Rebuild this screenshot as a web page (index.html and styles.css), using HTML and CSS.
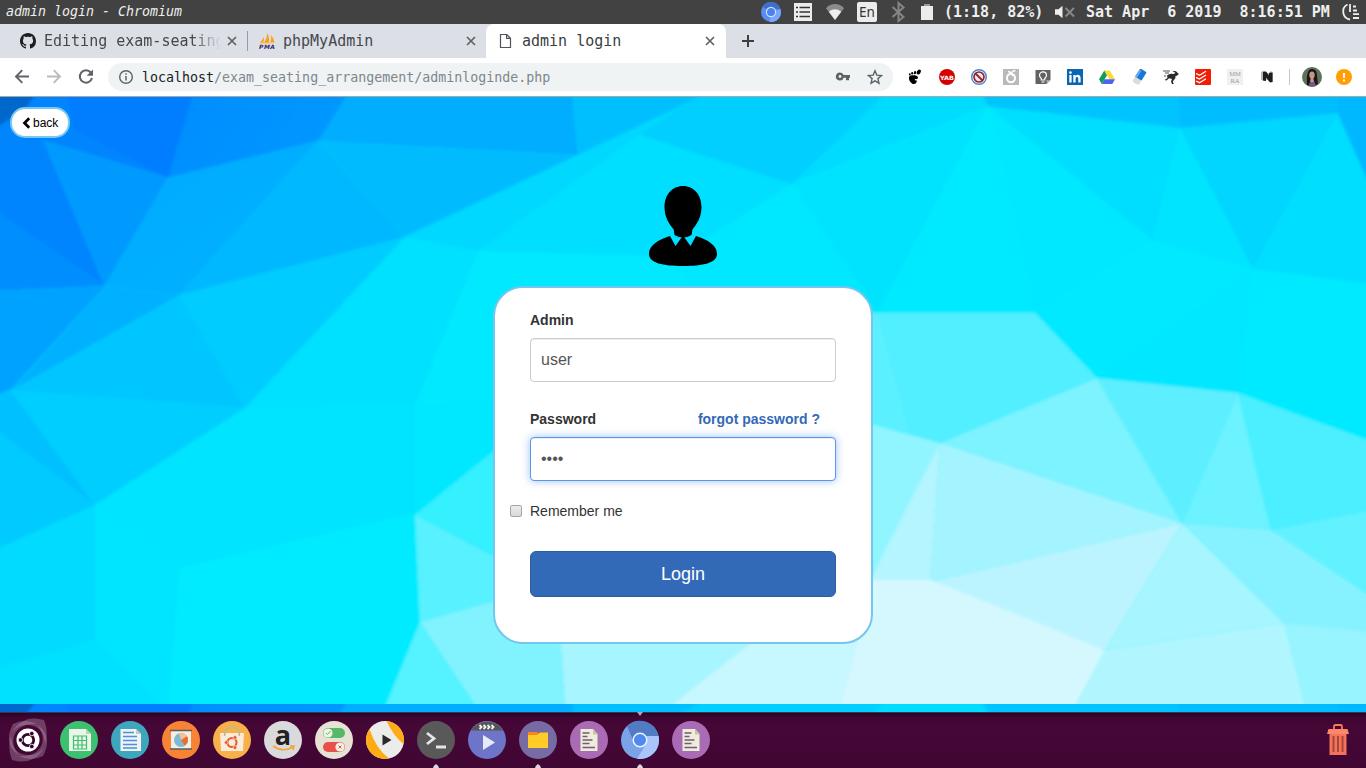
FILE: index.html
```html
<!DOCTYPE html>
<html lang="en">
<head>
<meta charset="utf-8">
<title>admin login</title>
<link rel="stylesheet" href="styles.css">
</head>
<body>
<div class="desktop">
  <header class="panel">
    <span class="panel-title">admin login - Chromium</span>
    <div class="indicators">
      <svg class="ind" viewBox="0 0 32 24"><circle cx="16" cy="12" r="10" fill="#5b8df0"/><path d="M16 12L7.500 6.500A10 10 0 0 1 25.500 9H16z" fill="#3f6fc9"/><path d="M16 12L25.600 9.300A10 10 0 0 1 14.500 22z" fill="#78a7fb"/><circle cx="16" cy="12" r="4.600" fill="#4b82ee" stroke="#cfe0ff" stroke-width="1.200"/></svg>
      <svg class="ind" viewBox="0 0 32 24"><path fill="#ececec" d="M7 3h18v18H7z"/><path d="M9 7.500h2m1.500 0H23M9 12h2m1.500 0H23M9 16.500h2m1.500 0H23" stroke="#333" stroke-width="1.700"/></svg>
      <svg class="ind" viewBox="0 0 32 24"><path fill="#8b8b8b" d="M7 8.200C12 2.700 20 2.700 25 8.200L16 20z"/><path fill="#eee" d="M9.800 11.700Q16 7 22.200 11.700L16 20z"/></svg>
      <svg class="ind" viewBox="0 0 32 24"><rect x="6" y="2" width="20" height="20" rx="2" fill="#ececec"/><text x="16" y="16.500" text-anchor="middle" class="en">En</text></svg>
      <svg class="ind" viewBox="0 0 32 24"><path d="M9.500 7l11 10L15.500 21V3l5 4.500-11 9.500" fill="none" stroke="#858585" stroke-width="2"/></svg>
      <svg class="ind battery" viewBox="0 0 26 24"><path fill="#999" d="M7 4h6v3H7z"/><path fill="#ececec" d="M4 6h12v14H4z"/></svg>
      <span class="charge">(1:18, 82%)</span>
      <svg class="volume" viewBox="0 0 22 24"><path fill="#eee" d="M1 9.300h3.500l4-3.600v12.600l-4-3.600H1z"/><path d="M11.500 8l8.500 8.500m0-8.500l-8.500 8.500" stroke="#888" stroke-width="2"/></svg>
      <span class="clock">Sat Apr&nbsp; 6 2019&nbsp; 8:16:51 PM</span>
      <svg class="session" viewBox="0 0 20 24"><path d="M7.500 4.500A8 8 0 0 0 10 19.500" fill="none" stroke="#eee" stroke-width="1.800"/><path d="M10 4v8" stroke="#eee" stroke-width="1.800"/><path d="M13 6.500h3M13 10.500h4M13 14.200h6M13 18h6" stroke="#eee" stroke-width="1.800"/></svg>
    </div>
  </header>

  <nav class="tabs">
    <div class="tab tab-github">
      <svg class="favicon" viewBox="0 0 16 16"><path fill="#1b1f23" d="M8 0C3.580 0 0 3.580 0 8c0 3.540 2.290 6.530 5.470 7.590.4.070.55-.17.55-.38 0-.19-.01-.82-.01-1.490-2.010.37-2.530-.49-2.690-.94-.09-.23-.48-.94-.82-1.130-.28-.15-.68-.52-.01-.53.63-.01 1.080.58 1.230.82.72 1.210 1.870.87 2.330.66.070-.52.28-.87.51-1.070-1.780-.2-3.640-.89-3.640-3.950 0-.87.31-1.590.82-2.150-.08-.2-.36-1.020.08-2.120 0 0 .67-.21 2.200.82.64-.18 1.320-.27 2-.27s1.360.09 2 .27c1.530-1.040 2.200-.82 2.200-.82.44 1.100.16 1.920.08 2.120.51.56.82 1.270.82 2.150 0 3.070-1.870 3.750-3.650 3.950.29.25.54.73.54 1.480 0 1.070-.01 1.930-.01 2.200 0 .21.15.46.55.38A8.010 8.010 0 0 0 16 8c0-4.420-3.580-8-8-8z"/></svg>
      <span class="tab-name fade">Editing exam-seating</span>
      <svg class="close" viewBox="0 0 10 10"><path d="M1 1l8 8m0-8L1 9"/></svg>
    </div>
    <div class="tab tab-pma">
      <svg class="favicon" viewBox="0 0 16 16"><path fill="#f8a11a" d="M1 10L5 4 4.500 10zM5 10Q8 5 8.500 0 11 5 10 10zM11 9.500Q13 6 11.500 1.500 15 5 15.500 9.500z"/><path d="M1 10h14" stroke="#f9c26b"/><text x="0" y="15.500" class="pma" textLength="16">PMA</text></svg>
      <span class="tab-name">phpMyAdmin</span>
      <svg class="close" viewBox="0 0 10 10"><path d="M1 1l8 8m0-8L1 9"/></svg>
    </div>
    <div class="tab tab-active">
      <svg class="favicon" viewBox="0 0 16 16"><path d="M2.500 1.500h6.300l3.700 3.700v9.300h-10zM8.600 1.500V5.400h3.900" fill="none" stroke="#505357" stroke-width="1.200"/></svg>
      <span class="tab-name">admin login</span>
      <svg class="close" viewBox="0 0 10 10"><path d="M1 1l8 8m0-8L1 9"/></svg>
    </div>
    <svg class="new-tab" viewBox="0 0 14 14"><path d="M7 1v12M1 7h12" stroke="#3c4043" stroke-width="2"/></svg>
  </nav>

  <div class="toolbar">
    <svg class="nav-btn" viewBox="0 0 32 32"><path d="M23 15.500H10m6.300-6.300L10 15.500l6.300 6.300" fill="none" stroke="#5f6368" stroke-width="1.900"/></svg>
    <svg class="nav-btn" viewBox="0 0 32 32"><path d="M9 15.500h13m-6.300-6.300l6.300 6.300-6.300 6.300" fill="none" stroke="#b9bbbe" stroke-width="1.900"/></svg>
    <svg class="nav-btn" viewBox="0 0 32 32"><path d="M20.800 11.500A6.200 6.200 0 1 0 22 17" fill="none" stroke="#5f6368" stroke-width="2"/><path d="M23 8.500v6.300h-6.300z" fill="#5f6368"/></svg>
    <div class="omnibox">
      <svg class="info" viewBox="0 0 16 16"><circle cx="8" cy="8" r="6.300" fill="none" stroke="#5f6368" stroke-width="1.400"/><path d="M8 7v4.500M8 4.300v1.500" stroke="#5f6368" stroke-width="1.500"/></svg>
      <span class="url"><b>localhost</b>/exam_seating_arrangement/adminloginde.php</span>
      <svg class="key" viewBox="0 0 16 16"><path fill="#5f6368" fill-rule="evenodd" d="M5 3.500a4 4 0 1 0 3.700 5.200H11v2.600h3V8.700h1V6.100H8.700A4 4 0 0 0 5 3.500zm0 2.600a1.400 1.400 0 1 1 0 2.800 1.400 1.400 0 0 1 0-2.800z"/></svg>
      <svg class="star" viewBox="0 0 16 16"><path d="M8 1.800l1.800 4.300 4.700.4-3.600 3.100 1.100 4.600L8 11.800l-4 2.400 1.100-4.600L1.500 6.500l4.700-.4z" fill="none" stroke="#5f6368" stroke-width="1.400"/></svg>
    </div>
    <div class="extensions">
      <svg viewBox="0 0 16 16"><path d="M2 8.200Q2.500 5.800 6 6.300 11 6 11 9 10.500 10.600 8.300 10 7 10.700 8.200 11.500 9.800 10.800 9.800 12.800 8.600 16 5.200 14.700 1.500 12 2 8.200z"/><ellipse cx="11.800" cy="3" rx="1.800" ry="2.700" transform="rotate(30 11.800 3)"/><ellipse cx="8" cy="3.700" rx="1.100" ry="1.700" transform="rotate(15 8 3.700)"/><ellipse cx="5.200" cy="4.300" rx="1" ry="1.300"/><ellipse cx="2.800" cy="5.400" rx=".9" ry="1.100"/></svg>
      <svg viewBox="0 0 16 16"><circle cx="8" cy="8" r="8" fill="#d50000"/><text x="8" y="10.500" text-anchor="middle" class="yab" textLength="14" lengthAdjust="spacingAndGlyphs">YAB</text></svg>
      <svg viewBox="0 0 16 16"><circle cx="8" cy="8" r="7.300" fill="#fff" stroke="#4285d4" stroke-width="1.400"/><circle cx="8" cy="8" r="5" fill="#e8e8f0" stroke="#9b2029" stroke-width="1.700"/><path d="M4.500 4.500l7 7" stroke="#9b2029" stroke-width="1.800"/></svg>
      <svg viewBox="0 0 16 16"><path fill="#b9b9b9" d="M0 0h16v16H0z"/><ellipse cx="8" cy="9" rx="4" ry="4.300" fill="none" stroke="#fff" stroke-width="2"/><path d="M5 2.500q2 0 3 2Q9 2 12.500 1.500M10 7L8 4.500" fill="none" stroke="#fff" stroke-width="1.400"/></svg>
      <svg viewBox="0 0 16 16"><path fill="#626262" d="M.5 1h15v10l-4 4H.5z"/><path fill="#aaa" d="M15.500 11h-4v4z"/><path d="M6.300 9.500Q4.500 8 4.500 6.300a3.500 3.500 0 0 1 7 0Q11.500 8 9.700 9.500v1.500H6.300zM6.500 13h3" fill="none" stroke="#fff" stroke-width="1.200"/></svg>
      <svg viewBox="0 0 16 16"><path fill="#0867b5" d="M0 0h16v16H0z"/><path fill="#fff" d="M2.300 6h2.300v7.500H2.300zM6.300 6h2.200v1C9.800 5 13.600 5.500 13.600 9v4.500h-2.300V9.500c0-2.200-2.700-2-2.700 0v4H6.300z"/><circle cx="3.450" cy="3.600" r="1.350" fill="#fff"/></svg>
      <svg viewBox="0 0 16 16"><path fill="#159b57" d="M5.300 1.500L8 6.200 2.700 15 0 10.300z"/><path fill="#ffda32" d="M5.300 1.500h5.400l5.300 8.800h-5.500z"/><path fill="#4866ed" d="M5.500 10.300H16L13.300 15H2.700z"/></svg>
      <svg viewBox="0 0 16 16"><g transform="rotate(32 8 8)"><rect x="4.500" y="0" width="7.500" height="10" rx="1" fill="#1978d4"/><path fill="#65a9ee" d="M4.500 1.500h2.300V10H4.500z"/><path fill="#dcdcdc" d="M4.500 10H12v4.500q-3.700 2-7.500 0z"/></g></svg>
      <svg viewBox="0 0 16 16"><path fill="#2b2b2b" d="M4 6.500Q7 3.800 10.500 5L12.500 4 9 1.800 13 2.200 15.800 5 14 6.800 12.500 7Q13 9.500 11 11L9.800 12.500 10.800 15H9L8 12.500 9 10 6 9.300 3.500 11.500 1.500 11 4.500 9z"/><path d="M0 2h7M2 4h4M1 7h2" stroke="#555" stroke-width="1.100"/></svg>
      <svg viewBox="0 0 16 16"><rect width="16" height="16" rx="1" fill="#f21d05"/><path d="M1 4.500l3.500 1.700 6.500-4M1 8.300L4.500 10 11 6M1 12l3.500 1.700 6.500-4" fill="none" stroke="#fff" stroke-width="1.300"/></svg>
      <svg viewBox="0 0 16 16"><path fill="#f0f0f0" d="M0 0h16v16H0z"/><text x="8" y="7" text-anchor="middle" class="mmra">MM</text><text x="8" y="14" text-anchor="middle" class="mmra">RA</text></svg>
      <svg viewBox="0 0 16 16"><path fill="#b5b5b5" d="M2 3l3-1.500 4 3 3-2.500 2 2v9l-3-1-5-2v2L2 11z"/><path fill="#1c1c1c" d="M4 3l3-.5 3 4V4l3.500-.5V13l-2.500.5-4-5V12l-3-.5z"/></svg>
    </div>
    <span class="divider"></span>
    <svg class="avatar" viewBox="0 0 20 20"><circle cx="10" cy="10" r="10" fill="#61715a"/><path fill="#17171e" d="M5 18Q4 3 9 2q6-1 6 7l1 8q-5 3-11 1z"/><ellipse cx="10" cy="8" rx="2.700" ry="3.600" fill="#c9967f"/><path fill="#745787" d="M6.500 19l2-5.500h3.500l2 5.500q-4 1.500-7.500 0z"/><path fill="#c9967f" d="M8.700 11h2.600l.5 3.500-1.800 1-1.800-1z"/></svg>
    <svg class="update" viewBox="0 0 16 16"><circle cx="8" cy="8" r="8" fill="#ff9f05"/><path d="M8 4v5M8 10.500v2" stroke="#fff" stroke-width="2"/></svg>
  </div>

  <main class="page">
    <svg class="backdrop" viewBox="0 97 1366 615" preserveAspectRatio="none">
      <defs>
        <linearGradient id="g2" x1="0" y1="0" x2="1" y2=".3"><stop offset="0" stop-color="#008cff"/><stop offset="1" stop-color="#0098ff"/></linearGradient>
        <linearGradient id="g3" x1="0" y1="0" x2="1" y2="1"><stop offset="0" stop-color="#00a8ff"/><stop offset="1" stop-color="#00b4ff"/></linearGradient>
        <filter id="soft" x="0" y="0" width="1" height="1"><feGaussianBlur stdDeviation="1.800"/></filter>
        <clipPath id="tile"><path d="M0 97h1366v607H0z"/></clipPath>
        <g id="facets" clip-path="url(#tile)"><g filter="url(#soft)">
          <path d="M-9 80h1390v640H-9z" fill="#00e8ff"/>
          <path fill="#0085ff" d="M-5 90H195L168 178 44 141 105 286-5 213z"/>
          <path fill="#007eff" d="M65 90H195L168 178 75 130z"/>
          <path fill="#0067cc" d="M-5 90H40L22 112-5 128z"/>
          <path fill="url(#g2)" d="M194 90H356L318 141 168 178z"/>
          <path fill="#009aff" d="M44 141l124 37-63 108z"/>
          <path fill="#008eff" d="M-5 210l110 76-110 5z"/>
          <path fill="url(#g3)" d="M168 178l150-37-138 154-75-9z"/>
          <path fill="#00a2ff" d="M-5 291l110-5-94 104-16 6z"/>
          <path fill="#00b1ff" d="M105 286l75 9L11 391z"/>
          <path fill="#00adff" d="M350 90h222l6 65-260-14z"/>
          <path fill="#00bcff" d="M318 141l260 14-173 82z"/>
          <path fill="#00b8ff" d="M318 141l87 96-225 58z"/>
          <path fill="#00bfff" d="M572 90H716L578 155z"/>
          <path fill="#00d8ff" d="M714 90L640 135 478 251 405 237 578 155z"/>
          <path fill="#00ccff" d="M180 295l225-58-160 171z"/>
          <path fill="#00c6ff" d="M180 295l65 113L11 391z"/>
          <path fill="#00ceff" d="M11 391l234 17L95 505z"/>
          <path fill="#00c0ff" d="M-5 396l16-5 84 114-100-75z"/>
          <path fill="#00caff" d="M-5 428l100 77-100 45z"/>
          <path fill="#00e0ff" d="M405 237l73 14-63 154-170 3z"/>
          <path fill="#00e9ff" d="M478 251l205 6v120l-268 28z"/>
          <path fill="#00e4ff" d="M245 408l170-3v110l-235 53-85-63z"/>
          <path fill="#00dbff" d="M-5 550l100-45v135l-100 30z"/>
          <path fill="#00e1ff" d="M-5 668l100-28 74 70H-5z"/>
          <path fill="#00e5ff" d="M95 505l85 63-11 142-74-70z"/>
          <path fill="#00ebff" d="M180 568l235-55 5 109-36 88H169z"/>
          <path fill="#00dfff" d="M640 135l152 49-114 72-200-5z"/>
          <path fill="#00cfff" d="M708 90h186l-102 94-152-49z"/>
          <path fill="#00dcff" d="M889 90h96l3 16-196 78z"/>
          <path fill="#00e3ff" d="M792 184l196-78-110 207z"/>
          <path fill="#00eaff" d="M988 106l47 207H878z"/>
          <path fill="#00e8ff" d="M988 106l165 135-118 72z"/>
          <path fill="#00deff" d="M988 106l192 22-27 113z"/>
          <path fill="#00c4ff" d="M980 90h200v38l-192-22z"/>
          <path fill="#00bdff" d="M1178 90h198l-38 24-158 14z"/>
          <path fill="#00e4ff" d="M1180 128l73 141-100-28z"/>
          <path fill="#00d6ff" d="M1180 128l158-15-85 156z"/>
          <path fill="#00deff" d="M1338 113l38 90v82l-123-16z"/>
          <path fill="#00b8ff" d="M1338 90h38v110l-38-86z"/>
          <path fill="#00e9ff" d="M1153 241l100 28-156 109-62-65z"/>
          <path fill="#00e7ff" d="M1253 269l-15 124-141-15z"/>
          <path fill="#00eaff" d="M1253 269l123 16v160l-138-52z"/>
          <path fill="#51efff" d="M860 313h175l62 65-157 65-80-22z"/>
          <path fill="#5af0ff" d="M860 313h18l32 121-50-13z"/>
          <path fill="#7cf3ff" d="M1097 378l85 145-242-80z"/>
          <path fill="#5defff" d="M1097 378l141 15-56 130z"/>
          <path fill="#6cf3ff" d="M1238 393l33 137-89-7z"/>
          <path fill="#4befff" d="M1238 393l138 50v68l-105 19z"/>
          <path fill="#62f2ff" d="M1376 510v90l-105-70z"/>
          <path fill="#90f5ff" d="M860 421l80 22-67 137z"/>
          <path fill="#b4f5ff" d="M940 443l-9 139-61-2z"/>
          <path fill="#a4f4ff" d="M940 443l242 80-251 59z"/>
          <path fill="#bbf4ff" d="M1182 523l-77 127-174-68z"/>
          <path fill="#a6f5ff" d="M1182 523l102 100-179 27z"/>
          <path fill="#87f2ff" d="M1182 523l89 7 105 70v35l-92-12z"/>
          <path fill="#98f4ff" d="M1284 623l92 10v77h-70z"/>
          <path fill="#b1f6ff" d="M1105 650l179-27 22 87H1073z"/>
          <path fill="#d5f8ff" d="M860 580h71l174 70-32 60H838l20-85z"/>
          <path fill="#c7f7ff" d="M760 634h100l-20 76H665z"/>
          <path fill="#a6f5ff" d="M560 636h200l-95 74H565z"/>
          <path fill="#34f0ff" d="M500 446v112l-85-43z"/>
          <path fill="#58f1ff" d="M415 515l85 44v42l-80 21z"/>
          <path fill="#80f3ff" d="M420 622l80-22 60 36 5 74h-87z"/>
          <path fill="#54f3ff" d="M420 622l58 88h-94z"/>
        </g></g>
      </defs>
      <use href="#facets"/>
      <use href="#facets" y="607"/>
    </svg>
    <a class="back"><svg viewBox="0 0 9 12"><path d="M7.200 1.300L2.500 6l4.700 4.700" fill="none" stroke="#000" stroke-width="2.700"/></svg>back</a>
    <svg class="person" viewBox="0 0 70 82"><path d="M35 1c11 0 18.500 9 18.500 21 0 10-4.500 17-9 22.500L43.500 50q-8.500 5-17 0l-.8-5.500C21 39 16.500 32 16.500 22 16.500 10 24 1 35 1z"/><path d="M22 51l5.500 10L35 50.500 42.500 61 48 51c12 4 21 9 21 18 0 9-14 12-34 12S1 78 1 69c0-9 9-14 21-18z"/></svg>
    <form class="card">
      <label class="label">Admin</label>
      <input class="field" type="text" value="user">
      <div class="label-row"><label>Password</label><a class="forgot">forgot password ?</a></div>
      <input class="field field-focus" type="password" value="pass">
      <label class="remember"><input type="checkbox">Remember me</label>
      <button class="login" type="button">Login</button>
    </form>
  </main>

  <footer class="dock">
    <div class="launchers">
      <svg viewBox="0 0 50 50"><g fill="#b99ab4" fill-opacity=".38"><path d="M9 17Q20-1 41 5q5 12 1 24Q41 11 25 10 16 9 9 17z"/><path d="M33 9q18 11 7 32-12 6-24 0 18 1 23-12Q42 18 33 9z"/><path d="M41 33Q30 51 9 45q-5-12-1-24Q9 39 25 40q9 1 16-7z"/><path d="M17 41Q-1 30 10 9q12-6 24 0Q16 8 11 21 8 32 17 41z"/></g><circle cx="25" cy="25" r="11.500" fill="#fff"/><circle cx="25" cy="25" r="5.700" fill="none" stroke="#35042c" stroke-width="2.800"/><g fill="#35042c" stroke="#fff" stroke-width=".8"><circle cx="17.500" cy="25" r="2.300"/><circle cx="28.800" cy="18.500" r="2.300"/><circle cx="28.800" cy="31.500" r="2.300"/></g></svg>
      <svg viewBox="0 0 50 50"><circle cx="25" cy="25" r="19" fill="#3bc16f"/><path fill="#ecf4e8" d="M15 14h17l5 5v17H15z"/><path fill="#c3cebd" d="M32 14v5h5z"/><path d="M19.500 21h13v13h-13zM19.500 25.500h13M19.500 30h13M24 21v13M28 21v13" fill="none" stroke="#3bc16f" stroke-width="1.200"/></svg>
      <svg viewBox="0 0 50 50"><circle cx="25" cy="25" r="19" fill="#3ea6bd"/><path fill="#f0f3ef" d="M15.500 14H31l5 5v17H15.500z"/><path fill="#bfcac9" d="M31 14v5h5z"/><path d="M18 17.500h11M18 21.500h14M18 25.500h14M18 29.500h14M18 33h14" stroke="#4c8fe2" stroke-width="1.300"/></svg>
      <svg viewBox="0 0 50 50"><circle cx="25" cy="25" r="19" fill="#f98335"/><path fill="#f2eee6" d="M15 16h20v18H15z"/><path d="M14 15.500h22M14 34h22" stroke="#5b5d5e" stroke-width="1.500"/><circle cx="25" cy="25" r="7" fill="#7db9d4"/><path fill="#ef6b26" d="M25 25l6-4q3 5-2 9.500z"/><path fill="#f9bf91" d="M25 25l-2-6.700q5-1.500 8 2.700z"/></svg>
      <svg viewBox="0 0 50 50"><circle cx="25" cy="25" r="19" fill="#f8b14a"/><path fill="#f9ecda" d="M13 18h24l-1 18H14z"/><path d="M17.500 21c0-12 15-12 15 0" fill="none" stroke="#b8bc8e" stroke-width="1.600"/><circle cx="25" cy="27.500" r="4.500" fill="none" stroke="#e65a31" stroke-width="2"/><g fill="#e65a31" stroke="#f9ecda" stroke-width=".7"><circle cx="19.300" cy="27.500" r="1.900"/><circle cx="28" cy="22.500" r="1.900"/><circle cx="28" cy="32.500" r="1.900"/></g></svg>
      <svg viewBox="0 0 50 50"><circle cx="25" cy="25" r="19" fill="#dad9dc"/><text x="25" y="30" text-anchor="middle" class="amazon">a</text><path d="M15 31q10 7 20 1m-3-1h4l-1 4" fill="none" stroke="#f4a536" stroke-width="1.600"/></svg>
      <svg viewBox="0 0 50 50"><circle cx="25" cy="25" r="19" fill="#e6e3d4"/><rect x="14" y="13" width="22" height="10" rx="5" fill="#55b969"/><circle cx="19" cy="18" r="4.600" fill="#f4f3e7"/><path d="M17 18l1.500 1.500L21.500 16" fill="none" stroke="#55b969"/><rect x="14" y="27" width="22" height="10" rx="5" fill="#e9524a"/><circle cx="31" cy="32" r="4.600" fill="#f4f3e7"/><path d="M29.500 30.500l3 3m0-3l-3 3" stroke="#e9524a"/></svg>
      <svg viewBox="0 0 50 50"><circle cx="25" cy="25" r="19" fill="#ececea"/><path fill="#ffab14" d="M26.500 6.100A19 19 0 0 1 43.500 29Q34 22 26.500 6.100zM9.500 14A19 19 0 0 0 29 43.500Q16 34 9.500 14z"/><path fill="#292929" d="M22.500 19.500v11l9-5.500z"/></svg>
      <svg viewBox="0 0 50 50"><circle cx="25" cy="25" r="19" fill="#595959"/><path d="M16 18l7 5.500-7 5.500M25 32h10" fill="none" stroke="#e5e5e5" stroke-width="2.800"/></svg>
      <svg viewBox="0 0 50 50"><circle cx="25" cy="25" r="19" fill="#6d75c8"/><path fill="#555" d="M9 15.500a19 19 0 0 1 32 0z"/><path d="M17.500 10l2 2-2 2M21.500 10l2 2-2 2M25.500 10l2 2-2 2M29.500 10l2 2-2 2" fill="none" stroke="#f4f4f4" stroke-width="1.800"/><path fill="#e8eafa" d="M21 20v15l12-7.500z"/></svg>
      <svg viewBox="0 0 50 50"><circle cx="25" cy="25" r="19" fill="#766ba3"/><path fill="#fa861c" d="M15 17h9l2 2v4H15z"/><path fill="#fecb27" d="M15 20h9l3-2.500h8V33H15z"/></svg>
      <svg viewBox="0 0 50 50"><g id="note"><circle cx="25" cy="25" r="19" fill="#a96cb4"/><path fill="#eeedda" d="M16.500 14H29l4.500 5v17h-17z"/><path fill="#c5c2a8" d="M29 14v5.500h4.500z"/><path d="M18.500 18h7M18.500 21.500h5M18.500 25h10M18.500 28.500h7M18.500 32.500H31" stroke="#755a79" stroke-width="1.300"/></g></svg>
      <svg viewBox="0 0 50 50"><circle cx="25" cy="25" r="19" fill="#79a2e8"/><path fill="#517cc4" d="M12 11a19 19 0 0 1 31.500 10H25l-7 4z"/><path fill="#a8c6fb" d="M32 21h11.600A19 19 0 0 1 22 43.800l8-13z"/><circle cx="25" cy="25" r="6.800" fill="#4f8aed" stroke="#edf3ff" stroke-width="1.500"/></svg>
      <svg viewBox="0 0 50 50"><use href="#note"/></svg>
    </div>
    <svg class="trash" viewBox="0 0 28 34"><path d="M10 6V3.500Q10 2 11.500 2h5Q18 2 18 3.500V6" fill="none" stroke="#f97b60" stroke-width="1.800"/><path fill="#f37459" d="M5.500 10h17v22h-17z"/><path fill="#fd8869" d="M3 11l1.500-5h19L25 11z"/><path d="M9.500 13v16M14 13v16M18.500 13v16" stroke="#a8443b" stroke-width="2"/></svg>
    <svg class="marks" viewBox="0 0 1366 56"><path fill="#ddd5dc" d="M433 56q0-2 3-4 3 2 3 4zM535 56q0-2 3-4 3 2 3 4zM637 56q0-2 3-4 3 2 3 4z"/><path fill="#aaa" d="M637 0h6l-3 4z"/></svg>
  </footer>
</div>
</body>
</html>
```
FILE: styles.css
```css
* { box-sizing: border-box; }
body { margin: 0; overflow: hidden; font: 14px/20px "Liberation Sans", sans-serif; color: #333; }
svg { display: block; flex: none; }
.desktop { width: 1366px; height: 768px; display: flex; flex-direction: column; }

/* system panel */
.panel { height: 24px; flex: none; display: flex; align-items: center; justify-content: space-between; background: #424242; color: #eee; font-family: "DejaVu Sans Mono", monospace; }
.panel-title { padding-left: 6px; font-size: 13.3px; font-style: italic; line-height: 24px; white-space: pre; }
.indicators { display: flex; align-items: center; height: 24px; width: 611px; font-size: 15px; font-weight: bold; white-space: pre; }
.ind { width: 32px; height: 24px; }
.en { font: 13.5px "Noto Sans", sans-serif; fill: #333; }
.charge { width: 110px; }
.charge, .clock { line-height: 24px; }
.volume { width: 22px; height: 24px; margin-right: 10px; }
.indicators .battery { margin-left: 2px; margin-right: 1px; width: 26px; }
.clock { width: 244px; margin-right: 10px; }
.session { width: 20px; height: 24px; }

/* tab strip */
.tabs { height: 34px; flex: none; display: flex; align-items: center; background: #dcdfe6; font: 15px/34px "DejaVu Sans Mono", monospace; color: #45484c; }
.tab { height: 34px; display: flex; align-items: center; }
.tab-github { width: 248px; padding: 0 11px 0 20px; background: linear-gradient(#999ca1, #999ca1) right center / 1px 20px no-repeat; }
.tab-pma { width: 238px; padding: 0 10px 0 11px; }
.tab-active { width: 240px; padding: 0 11px 0 12px; background: #fff; border-radius: 8px 8px 0 0; color: #3c4043; }
.favicon { width: 16px; height: 16px; margin-right: 8px; overflow: visible; }
.tab-name { flex: 1; white-space: nowrap; }
.tab-github .tab-name { flex: none; width: 182px; margin-right: 1px; }
.fade { -webkit-mask-image: linear-gradient(to right, #000 148px, transparent 177px); mask-image: linear-gradient(to right, #000 148px, transparent 177px); }
.close { width: 10px; height: 10px; stroke: #5f6368; stroke-width: 1.7; }
.new-tab { width: 14px; height: 14px; margin-left: 15px; }
.pma { font: italic bold 6px "DejaVu Sans", sans-serif; fill: #3b2766; }

/* address row */
.toolbar { height: 39px; flex: none; display: flex; align-items: center; padding: 0 0 1px 6px; background: #fff; border-bottom: 1px solid #aaa6a6; }
.nav-btn { width: 32px; height: 32px; }
.omnibox { width: 785px; height: 28px; margin-left: 6px; padding: 0 10px; display: flex; align-items: center; border-radius: 14px; background: #eff3f4; }
.info { width: 16px; height: 16px; margin-right: 8px; }
.url { flex: 1; padding-top: 1px; font: 13.3px/27px "DejaVu Sans Mono", monospace; color: #80868b; }
.url b { font-weight: normal; color: #202124; }
.key, .star { width: 16px; height: 16px; }
.star { margin-left: 16px; }
.extensions { display: flex; gap: 16px; margin-left: 14px; }
.extensions svg { width: 16px; height: 16px; }
.yab { font: bold 6px "DejaVu Sans", sans-serif; fill: #fff; }
.mmra { font: 6.5px "Liberation Serif", serif; fill: #999; }
.divider { width: 1px; height: 16px; margin-left: 14px; background: #c8c8c8; }
.avatar { width: 20px; height: 20px; margin-left: 12px; }
.update { width: 16px; height: 16px; margin-left: 14px; }

/* login page */
.page { position: relative; height: 615px; flex: none; display: flex; flex-direction: column; align-items: center; overflow: hidden; }
.backdrop { position: absolute; inset: 0; width: 1366px; height: 615px; }
.back { position: relative; align-self: flex-start; display: flex; align-items: center; width: 60px; height: 31px; margin: 10px 0 0 10px; padding-left: 10px; gap: 2px; border: 2px solid #79c8f0; border-radius: 15px; background: #fff; color: #000; font-size: 12px; }
.back svg { width: 9px; height: 12px; }
.person { position: relative; width: 70px; height: 82px; margin-top: 47px; }
.card { position: relative; width: 380px; height: 358px; margin-top: 19px; padding: 22px 35px 0; display: flex; flex-direction: column; border: 2px solid #74c5ef; border-radius: 30px; background: #fff; }
.label, .label-row { font-weight: bold; height: 20px; margin-bottom: 8px; }
.label-row { display: flex; justify-content: space-between; margin-top: 27px; padding-right: 16px; }
.forgot { color: #3369b8; }
.field { width: 100%; height: 44px; padding: 0 10px; border: 1px solid #ccc; border-radius: 4px; background: #fff; box-shadow: inset 0 1px 1px rgba(0,0,0,.075); font: 16px "Liberation Sans", sans-serif; color: #555; outline: none; }
.field-focus { border-color: #5897ec; box-shadow: inset 0 1px 1px rgba(0,0,0,.075), 0 0 8px rgba(88,151,236,.6); }
.remember { display: flex; align-items: center; height: 20px; margin: 20px 0 30px -20px; }
.remember input { appearance: none; width: 12px; height: 12px; margin: 0 8px 0 0; border: 1px solid #a5a5a5; border-radius: 2px; background: linear-gradient(#ececec, #d9d9d9); }
.login { height: 46px; padding: 0; border: 1px solid #2b5da5; border-radius: 6px; background: #336ab8; color: #fff; font: 18px "Liberation Sans", sans-serif; }

/* launcher dock */
.dock { position: relative; height: 56px; flex: none; display: flex; align-items: center; justify-content: space-between; padding: 0 14px 1px 3px; background: linear-gradient(#2a0422, #400632 5px, #460737 14px, #400632); border-top: 1px solid #35355b; }
.launchers { display: flex; gap: 1px; }
.launchers svg { width: 50px; height: 50px; }
.trash { width: 28px; height: 34px; }
.marks { position: absolute; left: 0; top: -1px; width: 1366px; height: 56px; }
.amazon { font: bold 27px "Open Sans", sans-serif; fill: #222; }
```
